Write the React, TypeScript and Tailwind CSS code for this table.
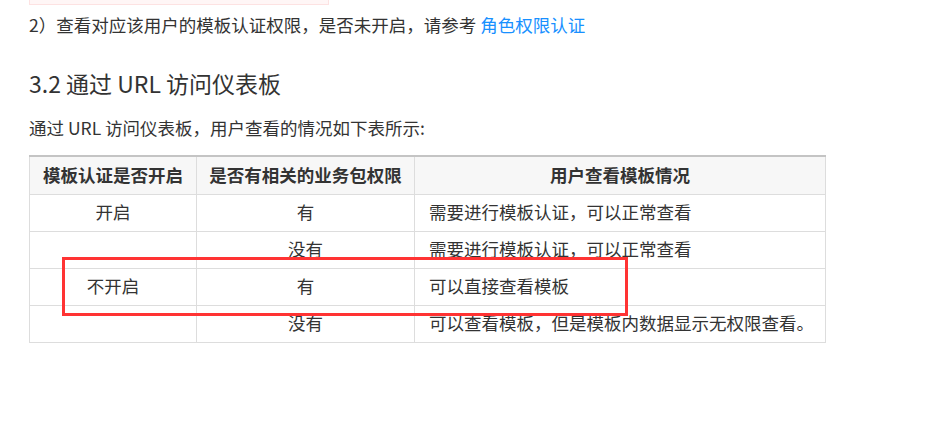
const font = { fontFamily: '"Microsoft YaHei", "Noto Sans CJK SC", "Noto Sans", sans-serif' };

const rows = [
  { enabled: '开启', pkg: '有', result: '需要进行模板认证，可以正常查看' },
  { enabled: '', pkg: '没有', result: '需要进行模板认证，可以正常查看' },
  { enabled: '不开启', pkg: '有', result: '可以直接查看模板' },
  { enabled: '', pkg: '没有', result: '可以查看模板，但是模板内数据显示无权限查看。' },
];

export default function App() {
  return (
    <div className="relative min-h-[424px] w-[937px] bg-white pl-[29px] text-[#333]" style={font}>
      {/* tail of the previous alert box */}
      <div className="h-[5px] w-[300px] border-x border-b border-[#fde2e2] bg-[#fff6f6]" />

      <p className="mt-[6px] text-[17.5px] leading-[28px]">
        2）查看对应该用户的模板认证权限，是否未开启，请参考{' '}
        <a href="#" className="text-[#1890ff]">角色权限认证</a>
      </p>

      <h3 className="mt-[27px] text-[23px] leading-[34px] font-normal">3.2 通过 URL 访问仪表板</h3>

      <p className="mt-[14px] text-[17.5px] leading-[28px]">通过 URL 访问仪表板，用户查看的情况如下表所示:</p>

      <table className="mt-[13px] w-[797px] border-collapse text-[17.5px]">
        <thead>
          <tr className="h-[38px] bg-[#f7f7f7]">
            <th className="w-[167px] border border-[#ddd] border-t-2 border-t-[#c4c4c4] font-bold">模板认证是否开启</th>
            <th className="w-[218px] border border-[#ddd] border-t-2 border-t-[#c4c4c4] font-bold">是否有相关的业务包权限</th>
            <th className="border border-[#ddd] border-t-2 border-t-[#c4c4c4] font-bold">用户查看模板情况</th>
          </tr>
        </thead>
        <tbody>
          {rows.map((r, i) => (
            <tr key={i} className="h-[37px]">
              <td className="border border-[#ddd] text-center">{r.enabled}</td>
              <td className="border border-[#ddd] text-center">{r.pkg}</td>
              <td className="border border-[#ddd] pl-[14px]">{r.result}</td>
            </tr>
          ))}
        </tbody>
      </table>

      {/* red highlight annotation */}
      <div className="absolute left-[62px] top-[257px] h-[59px] w-[566px] border-[3px] border-[#f33]" />
    </div>
  );
}
